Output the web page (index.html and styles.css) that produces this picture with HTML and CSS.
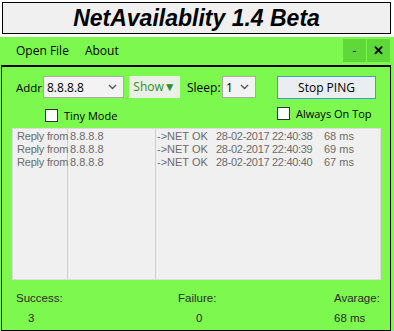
FILE: index.html
```html
<!DOCTYPE html>
<html lang="en">
<head>
    <meta charset="UTF-8">
    <title>NetAvailablity</title>
    <link rel="stylesheet" href="styles.css">
</head>
<body>
    <div class="title">NetAvailablity 1.4 Beta</div>

    <div class="window">
        <div class="menubar">
            <span class="menu-item">Open File</span>
            <span class="menu-item">About</span>
            <span class="spacer"></span>
            <span class="win-btn">-</span>
            <span class="win-btn close">&#x2715;</span>
        </div>

        <div class="panel">
            <div class="controls">
                <div class="row">
                    <label class="lbl addr-lbl">Addr:</label>
                    <div class="select addr">
                        <span>8.8.8.8</span>
                        <svg class="caret" width="9" height="6" viewBox="0 0 9 6"><polyline points="1,1 4.5,4.5 8,1" fill="none" stroke="#555" stroke-width="1.4"/></svg>
                    </div>
                    <div class="show-btn">Show&#x25BC;</div>
                    <label class="lbl sleep-lbl">Sleep:</label>
                    <div class="select sleep">
                        <span>1</span>
                        <svg class="caret" width="9" height="6" viewBox="0 0 9 6"><polyline points="1,1 4.5,4.5 8,1" fill="none" stroke="#555" stroke-width="1.4"/></svg>
                    </div>
                    <div class="stop-btn">Stop PING</div>
                </div>
                <div class="row checks">
                    <label class="check tiny"><span class="box"></span>Tiny Mode</label>
                    <label class="check ontop"><span class="box"></span>Always On Top</label>
                </div>
            </div>

            <div class="list">
                <div class="col c1">
                    <div>Reply from</div>
                    <div>Reply from</div>
                    <div>Reply from</div>
                </div>
                <div class="col c2">
                    <div>8.8.8.8</div>
                    <div>8.8.8.8</div>
                    <div>8.8.8.8</div>
                </div>
                <div class="col c3">
                    <div class="entry"><span class="st">-&gt;NET OK</span><span class="dt">28-02-2017 22:40:38</span><span>68 ms</span></div>
                    <div class="entry"><span class="st">-&gt;NET OK</span><span class="dt">28-02-2017 22:40:39</span><span>69 ms</span></div>
                    <div class="entry"><span class="st">-&gt;NET OK</span><span class="dt">28-02-2017 22:40:40</span><span>67 ms</span></div>
                </div>
            </div>

            <div class="stats">
                <div class="stat left">
                    <div>Success:</div>
                    <div class="val success">3</div>
                </div>
                <div class="stat mid">
                    <div>Failure:</div>
                    <div class="val failure">0</div>
                </div>
                <div class="stat right">
                    <div>Avarage:</div>
                    <div class="val">68 ms</div>
                </div>
            </div>
        </div>
    </div>
</body>
</html>
```

FILE: styles.css
```css
body {
    margin: 0;
    width: 394px;
    height: 331px;
    background: #fff;
    font-family: "Liberation Sans", Arial, sans-serif;
    overflow: hidden;
    white-space: nowrap;
}
.title {
    margin: 2px 3px 0 2px;
    height: 30px;
    border: 1px solid #000;
    background: #f0f0f0;
    text-align: center;
    font-size: 23px;
    font-weight: bold;
    font-style: italic;
    line-height: 30px;
    color: #000;
}
.window {
    margin-top: 3px;
    background: #7cf84e;
}
.menubar {
    display: flex;
    align-items: stretch;
    height: 26px;
    padding-top: 2px;
    font-family: "Open Sans", sans-serif;
    font-size: 12px;
}
.menu-item {
    padding: 0 8px;
    line-height: 24px;
    color: #000;
}
.menu-item:first-child {
    margin-left: 8px;
}
.spacer {
    flex: 1;
}
.win-btn {
    width: 23px;
    height: 23px;
    background: #5fd93a;
    text-align: center;
    line-height: 23px;
    margin-left: 1px;
    font-size: 12px;
}
.close {
    font-size: 13px;
    font-weight: bold;
    margin-right: 4px;
}
.panel {
    border: 1px solid #000;
    border-top-width: 2px;
    margin: 0 3px 0 1px;
    height: 263px;
    font-size: 12px;
}
.controls {
    padding: 8px 0 0 14px;
    font-family: "Open Sans", sans-serif;
    font-size: 11.5px;
}
.row {
    display: flex;
    align-items: center;
    height: 24px;
}
.addr-lbl {
    width: 27px;
}
.select {
    display: flex;
    justify-content: space-between;
    align-items: center;
    height: 22px;
    box-sizing: border-box;
    border: 1px solid #a9a9a9;
    background: #f3f3f3;
    padding: 0 6px 0 3px;
    font-size: 12px;
}
.addr {
    width: 81px;
}
.show-btn {
    margin-left: 5px;
    width: 51px;
    height: 22px;
    line-height: 22px;
    box-sizing: border-box;
    background: #eaf0e6;
    color: #2e8b2e;
    text-align: center;
    font-size: 12px;
}
.sleep-lbl {
    margin-left: 7px;
    width: 35px;
    font-size: 12px;
}
.sleep {
    width: 34px;
}
.stop-btn {
    margin-left: 21px;
    width: 99px;
    height: 23px;
    box-sizing: border-box;
    border: 1px solid #3a9fd6;
    background: #ebeef0;
    text-align: center;
    line-height: 21px;
    font-size: 12px;
}
.checks {
    height: 22px;
    align-items: flex-start;
    font-size: 11px;
}
.check {
    display: flex;
    align-items: center;
}
.tiny {
    margin-left: 29px;
    margin-top: 9px;
    width: 232px;
}
.ontop {
    margin-top: 7px;
}
.box {
    width: 11px;
    height: 11px;
    border: 1px solid #333;
    background: #fff;
    margin-right: 6px;
}
.list {
    display: flex;
    margin: 7px 9px 0 10px;
    height: 150px;
    background: #f0f0f0;
    border: 1px solid #dcdcdc;
    color: #6b6b6b;
    font-size: 11px;
    line-height: 13px;
}
.col {
    padding-top: 1px;
    box-sizing: border-box;
}
.c1 {
    width: 55px;
    padding-left: 4px;
    border-right: 1px solid #cfcfcf;
    letter-spacing: -0.2px;
}
.c2 {
    width: 88px;
    padding-left: 2px;
    border-right: 1px solid #cfcfcf;
}
.c3 {
    flex: 1;
    padding-left: 1px;
}
.entry span {
    display: inline-block;
}
.st {
    width: 59px;
}
.dt {
    width: 108px;
    letter-spacing: -0.3px;
}
.stats {
    display: flex;
    padding: 11px 0 0 14px;
    color: #2b2b2b;
    font-size: 11.5px;
    line-height: 14px;
}
.stat .val {
    margin-top: 6px;
}
.left {
    width: 162px;
}
.mid {
    width: 156px;
}
.success {
    padding-left: 12px;
}
.failure {
    padding-left: 18px;
}
```
